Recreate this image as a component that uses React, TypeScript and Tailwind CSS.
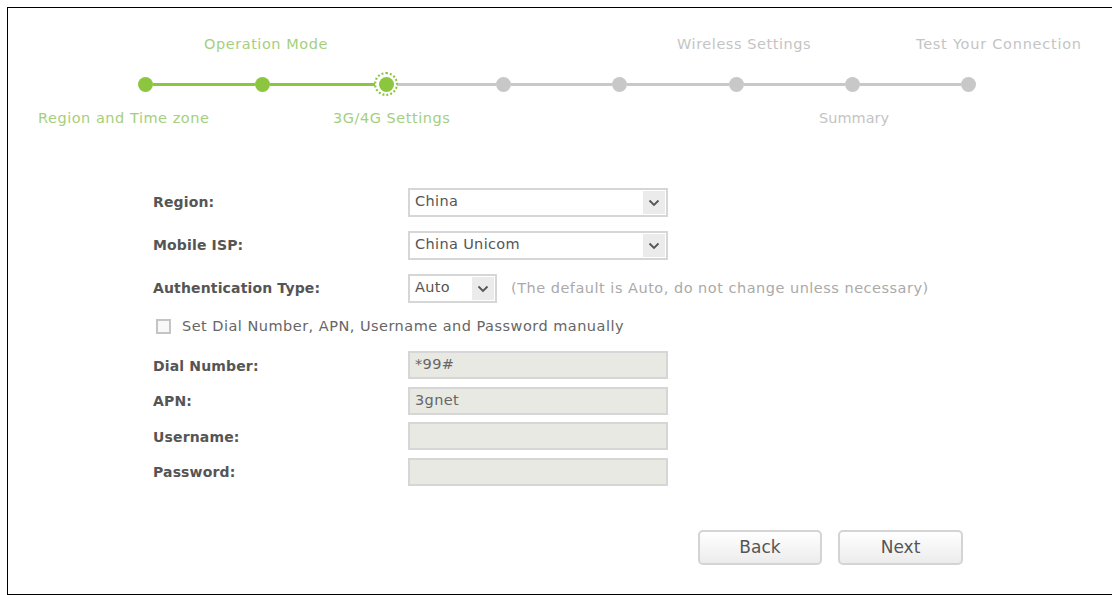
import React from "react";

const font = "[font-family:'DejaVu_Sans',sans-serif]";

function Chevron() {
  return (
    <svg width="12" height="8" viewBox="0 0 12 8" fill="none">
      <path d="M1.5 1.5 L6 6 L10.5 1.5" stroke="#555555" strokeWidth="1.8" />
    </svg>
  );
}

function Select({ value, width }: { value: string; width: string }) {
  return (
    <div className={`${width} h-[29px] flex items-center justify-between border-2 border-[#d6d6d6] bg-white pl-[5px] pr-[1px]`}>
      <span className="pb-[1px] text-[14.5px] tracking-[0.35px] text-[#555]">{value}</span>
      <span className="w-[22px] h-[23px] bg-[#ebebeb] flex items-center justify-center">
        <Chevron />
      </span>
    </div>
  );
}

function Label({ children }: { children: React.ReactNode }) {
  return <span className="w-[255px] text-[14px] font-bold tracking-[0.15px] text-[#555]">{children}</span>;
}

function Field({ label, value }: { label: string; value?: string }) {
  return (
    <div className="flex items-center">
      <span className="flex pt-[2px]">
        <Label>{label}</Label>
      </span>
      <div className="w-[260px] h-[28px] flex items-center border-2 border-[#d6d6d6] bg-[#e9e9e3] pl-[5px] text-[14.5px] tracking-[0.35px] text-[#666]">
        {value}
      </div>
    </div>
  );
}

function Dot({ color }: { color: string }) {
  return <span className={`w-[15px] h-[15px] rounded-full shrink-0 ${color}`} />;
}

function Line({ color, width }: { color: string; width: string }) {
  return <span className={`h-[3px] shrink-0 ${width} ${color}`} />;
}

function Button({ children, width }: { children: React.ReactNode; width: string }) {
  return (
    <button className={`${width} h-[35px] rounded-[5px] border-2 border-[#d4d4d4] bg-gradient-to-b from-white to-[#ececec] text-[17px] text-[#555]`}>
      {children}
    </button>
  );
}

export default function App() {
  const green = "bg-[#8cc63f]";
  const grey = "bg-[#c8c8c8]";
  return (
    <div className={`${font} w-[1112px] h-[595px] bg-white overflow-hidden pt-[7px] pl-[7px]`}>
      <div className="w-[1105px] h-[588px] border-t border-l border-b border-black">
        <div className="flex h-[20px] mt-[27px] text-[14.5px] tracking-[0.55px] items-center">
          <span className="ml-[196px] w-[473px] text-[#a5cf7c]">Operation Mode</span>
          <span className="w-[239px] text-[#c4c4c4]">Wireless Settings</span>
          <span className="tracking-[0.75px] text-[#c4c4c4]">Test Your Connection</span>
        </div>
        <div className="flex items-center h-[20px] mt-[19px] ml-[130px]">
          <Dot color={green} />
          <Line color={green} width="w-[102px]" />
          <Dot color={green} />
          <Line color={green} width="w-[105px]" />
          <span className="relative w-[24px] h-[24px] shrink-0 rounded-full border-2 border-dotted border-[#8cc63f] flex items-center justify-center -mx-[1px]">
            <Dot color={green} />
          </span>
          <Line color={grey} width="w-[99px]" />
          <Dot color={grey} />
          <Line color={grey} width="w-[101.33px]" />
          <Dot color={grey} />
          <Line color={grey} width="w-[101.33px]" />
          <Dot color={grey} />
          <Line color={grey} width="w-[101.33px]" />
          <Dot color={grey} />
          <Line color={grey} width="w-[101.33px]" />
          <Dot color={grey} />
        </div>
        <div className="flex h-[20px] mt-[15px] text-[14.5px] tracking-[0.53px] items-center">
          <span className="ml-[30px] w-[295px] text-[#a5cf7c]">Region and Time zone</span>
          <span className="w-[486px] text-[#a5cf7c]">3G/4G Settings</span>
          <span className="tracking-[0px] text-[#c4c4c4]">Summary</span>
        </div>
        <div className="ml-[145px] mt-[59px] flex flex-col">
          <div className="flex items-center">
            <Label>Region:</Label>
            <Select value="China" width="w-[260px]" />
          </div>
          <div className="flex items-center mt-[14px]">
            <Label>Mobile ISP:</Label>
            <Select value="China Unicom" width="w-[260px]" />
          </div>
          <div className="flex items-center mt-[14px]">
            <Label>Authentication Type:</Label>
            <Select value="Auto" width="w-[89px]" />
            <span className="ml-[14px] text-[14.5px] tracking-[0.5px] text-[#aaa]">
              (The default is Auto, do not change unless necessary)
            </span>
          </div>
          <div className="flex items-center mt-[13px] h-[20px]">
            <span className="w-[15px] h-[15px] ml-[3px] border-2 border-[#c4c4c4] bg-[#f8f8f8]" />
            <span className="ml-[11px] pt-[2px] text-[14.5px] tracking-[0.48px] text-[#666]">
              Set Dial Number, APN, Username and Password manually
            </span>
          </div>
          <div className="flex flex-col gap-[7.67px] mt-[15px]">
            <Field label="Dial Number:" value="*99#" />
            <Field label="APN:" value="3gnet" />
            <Field label="Username:" />
            <Field label="Password:" />
          </div>
        </div>
        <div className="flex gap-[16px] ml-[690px] mt-[44px]">
          <Button width="w-[124px]">Back</Button>
          <Button width="w-[125px]">Next</Button>
        </div>
      </div>
    </div>
  );
}
